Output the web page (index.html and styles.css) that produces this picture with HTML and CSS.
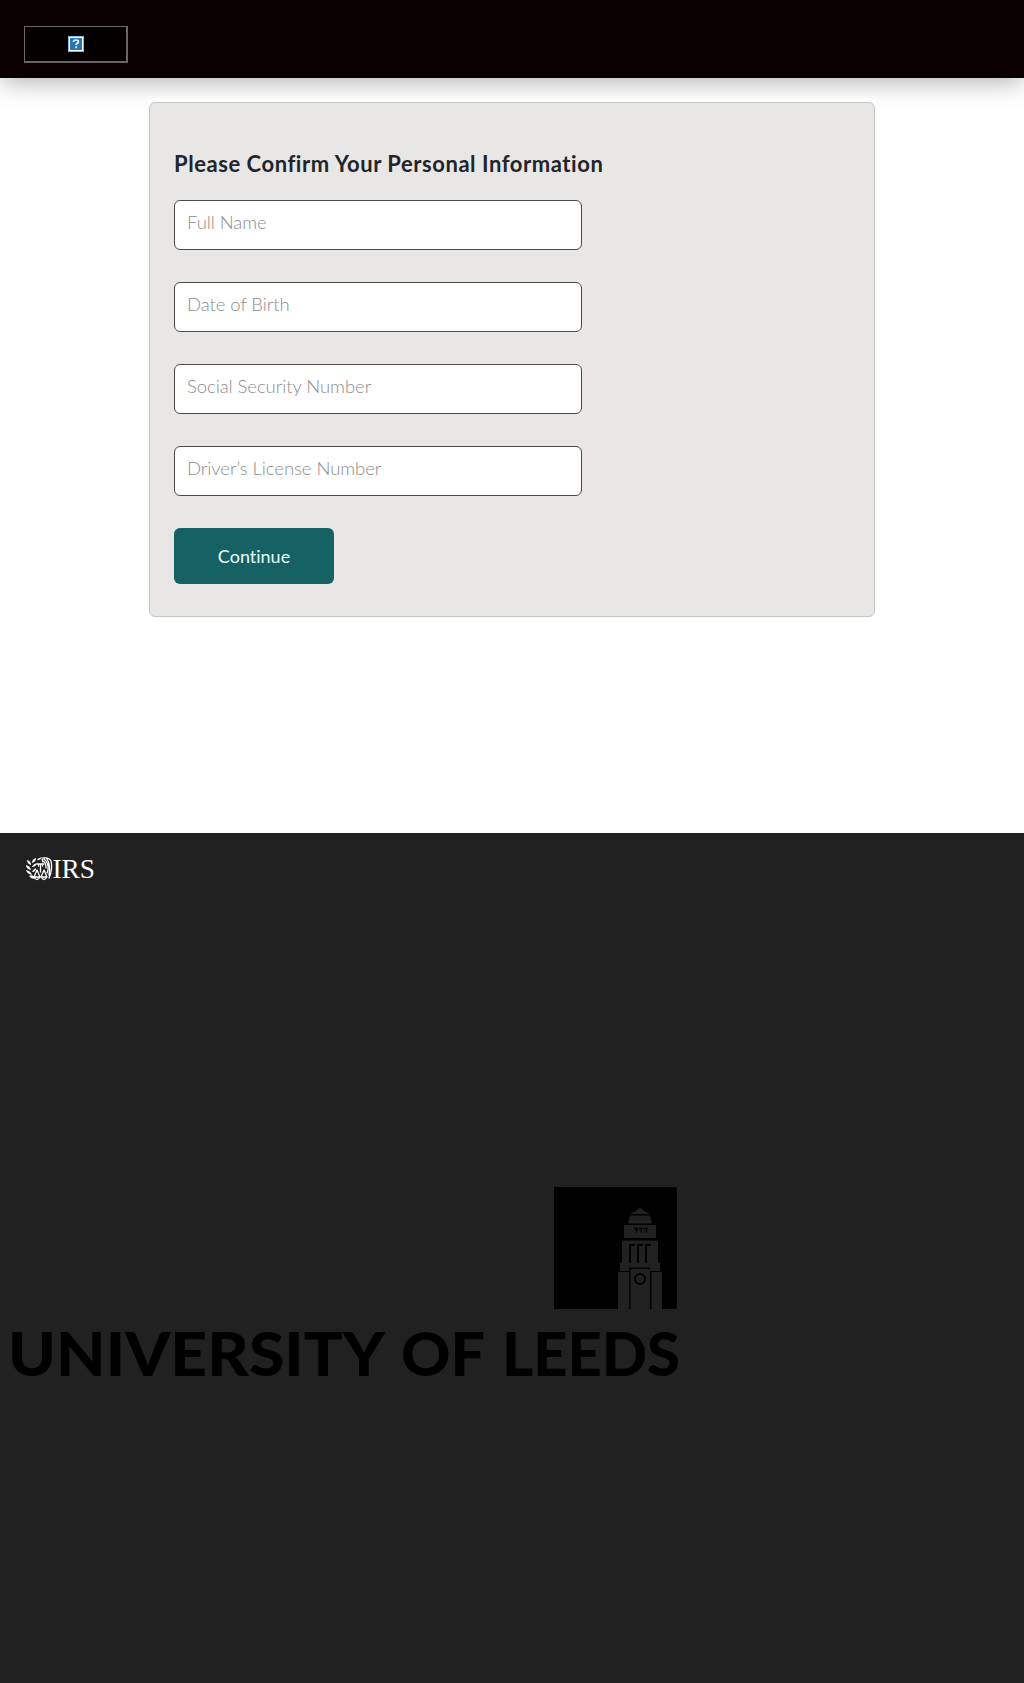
FILE: index.html
```html
<!DOCTYPE html>
<html lang="en">
<head>
<meta charset="utf-8">
<title>Personal information layout</title>
<link rel="stylesheet" href="styles.css">
</head>
<body>
<header class="topbar">
  <div class="logo-missing">
    <svg class="missing-icon" viewBox="0 0 16 16" role="img" aria-label="Missing image">
      <rect width="16" height="16" fill="#8fb9dc"/>
      <rect x="1" y="1" width="14" height="14" fill="#fff"/>
      <rect x="2" y="2" width="12" height="12" fill="#2878b8"/>
      <path d="M5.6 6V5.2Q6 4 8 4Q10.4 4 10.4 5.8Q10.4 7 8.9 7.6Q8.1 8 8.1 9" fill="none" stroke="#e4f3ff" stroke-width="1.7"/>
      <rect x="7.2" y="10.3" width="1.9" height="1.9" fill="#e4f3ff"/>
    </svg>
  </div>
</header>
<main class="content">
  <section class="card">
    <h1 class="title">Please Confirm Your Personal Information</h1>
    <div class="fields">
      <div class="field"><span class="hint">Full Name</span></div>
      <div class="field"><span class="hint">Date of Birth</span></div>
      <div class="field"><span class="hint">Social Security Number</span></div>
      <div class="field"><span class="hint">Driver’s License Number</span></div>
    </div>
    <div class="action">Continue</div>
  </section>
</main>
<footer class="footer">
  <svg class="irs" viewBox="0 0 76 32" role="img" aria-label="IRS">
    <g fill="#fff">
      <path d="M2 4Q6 5 6 9Q2 8 2 4zM1 9Q5 10 6 14Q1 13 1 9zM1 14Q6 15 7 19Q2 18 1 14zM4 20Q8 18 11 22Q7 24 4 20z"/>
      <path d="M11 2Q11 6 7 7Q7 3 11 2zM12 7Q11 11 7 11Q8 8 12 7zM11 12Q11 16 7 16Q8 13 11 12zM17 1Q15 5 12 4Q13 2 17 1z"/>
    </g>
    <g fill="none" stroke="#fff" stroke-width="1.300" stroke-linecap="round" stroke-linejoin="round">
      <path d="M12 8H19M15.500 8V16M13.500 8V10M17.500 8V10"/>
      <path d="M12 14L9 21H15zM19 14L16 21H22zM9 21Q12 26 15 21M16 21Q19 26 22 21"/>
      <path d="M18 2Q24 1 26 5Q28 13 24 22M18 5Q21 6 21 12M19 3Q24 7 23 14L22 17M22 3Q26 9 24 19M17 3L18 6"/>
    </g>
    <text class="irs-text" x="27.500" y="22" textLength="42.500" lengthAdjust="spacingAndGlyphs">IRS</text>
  </svg>
  <svg class="leeds" viewBox="0 0 700 220" role="img" aria-label="University of Leeds">
    <rect x="554" y="0" width="123" height="122"/>
    <g fill="#212121">
      <path d="M630 27Q635 25 640 20.500Q645 25 650 27z"/>
      <path d="M630 28.500H650L652 36.500H628z"/>
      <path d="M624 38H656V51H624z"/>
      <path d="M622 53.500H658V76H660V84H650V80.500H629V84H620V76H622z"/>
      <path d="M618 85H629V122H618zM630.500 82H650V122H630.500zM651.500 85H662V122H651.500z"/>
    </g>
    <g fill="none" stroke="#000" stroke-width="2">
      <path d="M630 76V58H635M638 76V58H643M646 76V58H651"/>
      <path d="M634 41.500h3l-1 4M639 41.500h3l-1 4M644 41.500h3l-1 4" stroke-width="1.300"/>
      <circle cx="640" cy="92" r="5"/>
    </g>
    <g class="leeds-text">
      <text x="8" y="189" textLength="377" lengthAdjust="spacingAndGlyphs">UNIVERSITY</text>
      <text x="401" y="189" textLength="84" lengthAdjust="spacingAndGlyphs">OF</text>
      <text x="502" y="189" textLength="178" lengthAdjust="spacingAndGlyphs">LEEDS</text>
    </g>
  </svg>
</footer>
</body>
</html>
```
FILE: styles.css
```css
* { box-sizing: border-box; }
body { margin: 0; background: #fff; font-family: Lato, "Open Sans", sans-serif; }
.topbar {
  height: 78px;
  padding: 26px 24px;
  background: #0a0001;
  box-shadow: 0 4px 24px rgba(0, 0, 0, .3);
}
.logo-missing {
  display: flex;
  align-items: center;
  justify-content: center;
  width: 104px;
  height: 37px;
  border: 1px solid #6a6666;
  border-right-width: 2px;
  border-bottom-width: 2px;
  background: #050000;
}
.missing-icon { width: 16px; height: 16px; }
.content { height: 755px; padding-top: 24px; }
.card {
  position: relative;
  width: 726px;
  height: 515px;
  margin: 0 auto;
  padding: 46px 24px 0;
  border: 1px solid #c5c5c4;
  border-radius: 6px;
  background: #e8e7e6;
  box-shadow: 0 0 4px 3px #fff;
}
.title {
  margin: 0 0 21px;
  font-size: 22px;
  line-height: 30px;
  font-weight: 700;
  font-variant-ligatures: none;
  letter-spacing: .55px;
  color: #212529;
  white-space: nowrap;
}
.fields { display: grid; gap: 32px; }
.field {
  width: 408px;
  height: 50px;
  padding: 9px 12px;
  border: 1px solid #4b4b4b;
  border-radius: 6px;
  background: #fff;
}
.hint {
  display: block;
  width: max-content;
  font-size: 18.5px;
  line-height: 24px;
  font-weight: 300;
  letter-spacing: -.06px;
  color: #8c8c8c;
}
.action {
  display: flex;
  align-items: center;
  justify-content: center;
  width: 160px;
  height: 56px;
  margin-top: 32px;
  border-radius: 6px;
  background: #166163;
  color: #e8ffff;
  font-size: 18px;
  font-variant-ligatures: none;
}
.footer { height: 850px; padding-top: 23px; background: #212121; }
.irs { display: block; width: 76px; height: 32px; margin-left: 25px; }
.irs-text { font: 28px "Liberation Serif", serif; fill: #fff; }
.leeds { display: block; width: 700px; height: 220px; margin-top: 299px; }
.leeds-text { font: 900 61px Lato, sans-serif; }
```
